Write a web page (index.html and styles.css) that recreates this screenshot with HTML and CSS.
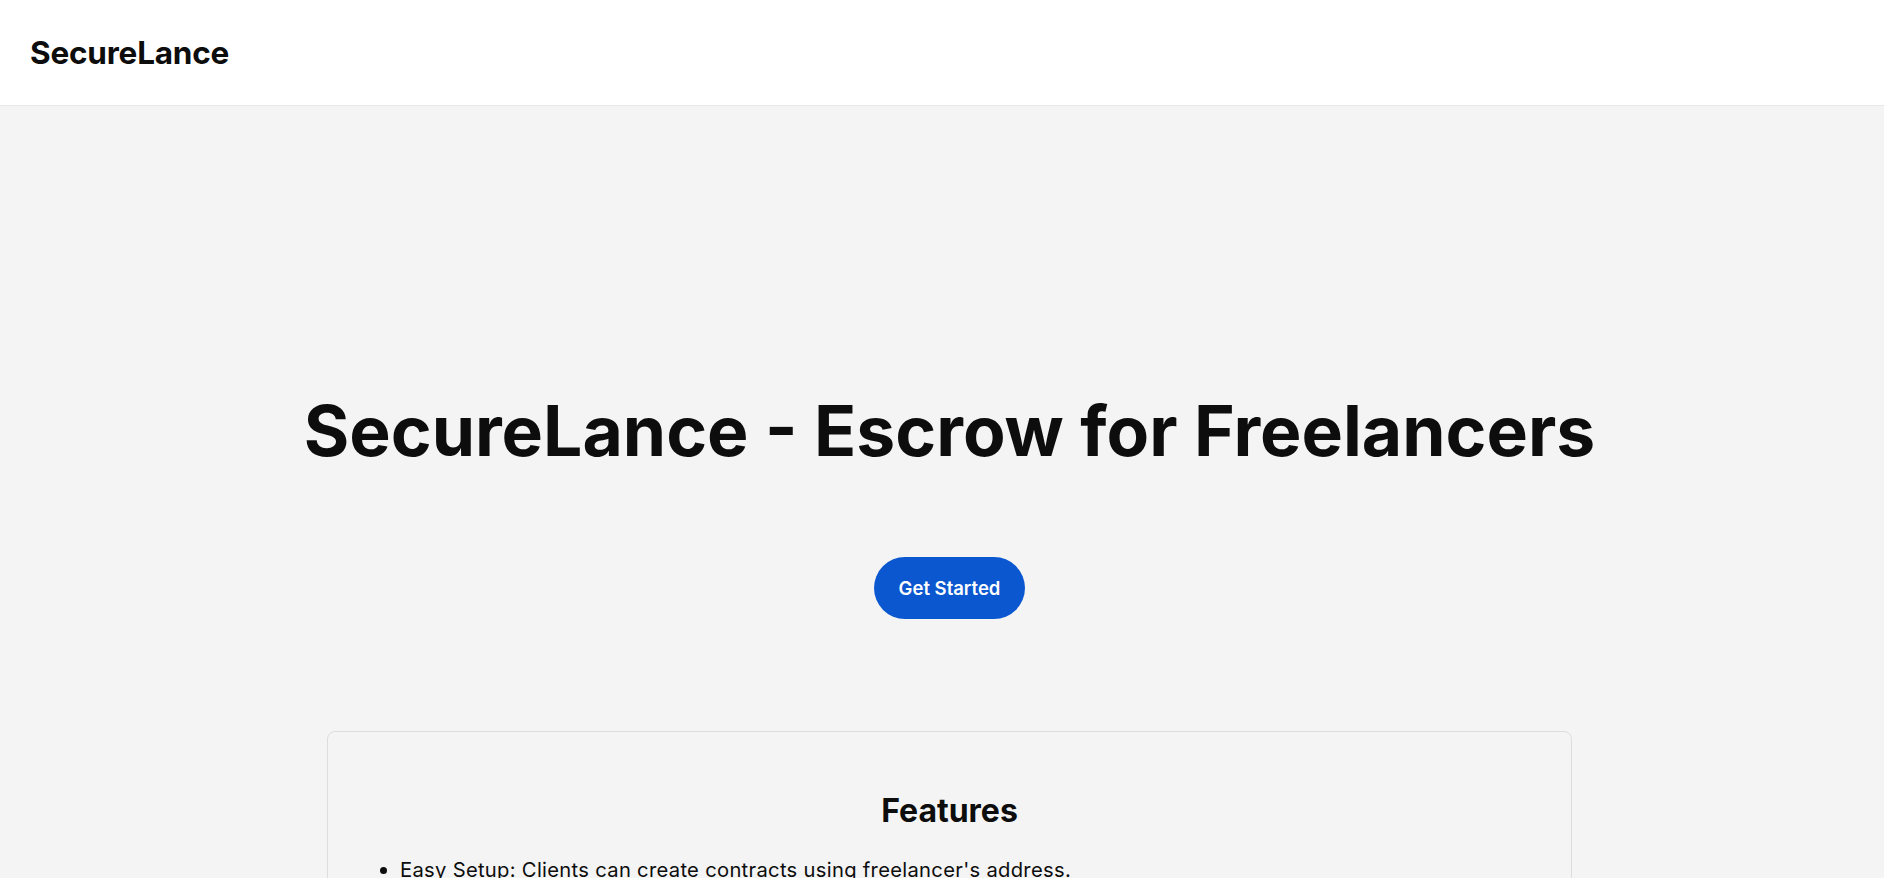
FILE: index.html
```html
<!DOCTYPE html>
<html lang="en">
<head>
<meta charset="utf-8">
<title>SecureLance</title>
<link rel="stylesheet" href="styles.css">
</head>
<body>
<header class="site-header">
  <div class="logo">SecureLance</div>
</header>
<main class="main">
  <section class="hero">
    <h1 class="hero-title">SecureLance - Escrow for Freelancers</h1>
    <button class="cta">Get Started</button>
  </section>
  <section class="card">
    <h2 class="card-title">Features</h2>
    <ul class="feature-list">
      <li>Easy Setup: Clients can create contracts using freelancer's address.</li>
      <li>Secure Payments: Funds are held in escrow until the work is approved.</li>
      <li>Transparent: Every contract and payment is recorded on-chain.</li>
      <li>Dispute Resolution: Fair handling of disagreements between parties.</li>
    </ul>
  </section>
</main>
</body>
</html>
```
FILE: styles.css
```css
* { box-sizing: border-box; }
html, body { margin: 0; padding: 0; }
body {
  background: #f4f4f4;
  color: #0d0d0d;
  font-family: Inter, "Noto Sans", "DejaVu Sans", sans-serif;
}
.site-header {
  height: 106px;
  background: #ffffff;
  border-bottom: 1px solid #e8e8e8;
  display: flex;
  align-items: center;
  padding-left: 30px;
}
.logo {
  font-size: 31.5px;
  font-weight: 700;
  letter-spacing: -0.2px;
}
.main {
  padding-left: 15px;
}
.hero {
  display: flex;
  flex-direction: column;
  align-items: center;
  padding-top: 284px;
}
.hero-title {
  margin: 0;
  font-size: 69.6px;
  line-height: 1.2;
  font-weight: 700;
  letter-spacing: 0;
}
.cta {
  margin-top: 83px;
  width: 151px;
  height: 62px;
  border: none;
  border-radius: 31px;
  background: #0b57d0;
  color: #ffffff;
  font-family: inherit;
  font-size: 18.5px;
  font-weight: 600;
  cursor: pointer;
}
.card {
  width: 1245px;
  margin: 112px auto 0;
  border: 1px solid #dddddd;
  border-radius: 8px;
  padding: 60px 32px 32px;
}
.card-title {
  margin: 0 0 24px;
  text-align: center;
  font-size: 32px;
  line-height: 1.2;
  font-weight: 700;
}
.feature-list {
  margin: 0;
  padding-left: 40px;
  font-size: 20.2px;
  letter-spacing: 0.3px;
  line-height: 1.6;
}
```
